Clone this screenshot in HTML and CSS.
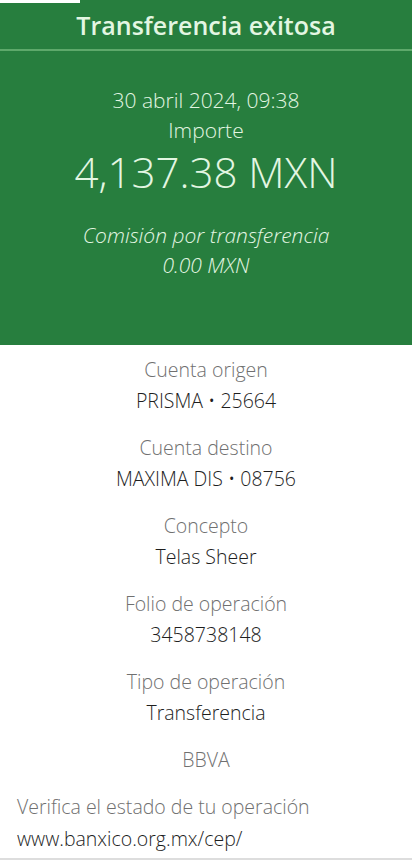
FILE: index.html
```html
<!DOCTYPE html>
<html lang="es">
<head>
    <meta charset="UTF-8">
    <meta name="viewport" content="width=device-width, initial-scale=1.0">
    <title>Transferencia exitosa</title>
    <link rel="stylesheet" href="styles.css">
</head>
<body>

<!-- Green summary block -->
<div class="summary">
    <div class="top-strip"></div>
    <h1 class="title">Transferencia exitosa</h1>
    <div class="summary-body">
        <p class="date">30 abril 2024, 09:38</p>
        <p class="amount-label">Importe</p>
        <p class="amount">4,137.38 MXN</p>
        <p class="fee">Comisión por transferencia</p>
        <p class="fee">0.00 MXN</p>
    </div>
</div>

<!-- Details list -->
<div class="details">
    <div class="item">
        <p class="label">Cuenta origen</p>
        <p class="value">PRISMA • 25664</p>
    </div>
    <div class="item">
        <p class="label">Cuenta destino</p>
        <p class="value">MAXIMA DIS • 08756</p>
    </div>
    <div class="item">
        <p class="label">Concepto</p>
        <p class="value">Telas Sheer</p>
    </div>
    <div class="item">
        <p class="label">Folio de operación</p>
        <p class="value">3458738148</p>
    </div>
    <div class="item">
        <p class="label">Tipo de operación</p>
        <p class="value">Transferencia</p>
    </div>
    <div class="item bank">
        <p class="label">BBVA</p>
    </div>
</div>

<div class="verify">
    <p class="label">Verifica el estado de tu operación</p>
    <p class="value">www.banxico.org.mx/cep/</p>
</div>

</body>
</html>
```

FILE: styles.css
```css
body {
    margin: 0;
    padding: 0;
    font-family: "Open Sans", Roboto, sans-serif;
    background-color: #fff;
}
p {
    margin: 0;
}
.summary {
    background-color: #277e3e;
    color: #e3f6e2;
    text-align: center;
    height: 345px;
}
.top-strip {
    width: 80px;
    height: 3px;
    background-color: #fff;
}
.title {
    margin: 0;
    height: 46px;
    line-height: 44px;
    font-size: 25px;
    font-weight: 600;
    border-bottom: 2px solid #5ea96b;
}
.summary-body {
    padding-top: 34px;
}
.date, .amount-label {
    font-size: 21px;
    font-weight: 300;
    line-height: 30px;
}
.amount {
    font-size: 42px;
    font-weight: 300;
    line-height: 54px;
    margin-bottom: 21px;
}
.fee {
    font-size: 21px;
    font-style: italic;
    font-weight: 300;
    line-height: 30px;
}
.details {
    text-align: center;
    padding-top: 12px;
}
.item {
    height: 78px;
}
.item.bank {
    height: 47px;
}
.label {
    color: #707070;
    font-size: 19.5px;
    font-weight: 300;
    line-height: 26px;
}
.value {
    color: #1e1e1e;
    font-size: 19.5px;
    font-weight: 350;
    line-height: 36px;
}
.verify {
    padding: 0 17px;
    border-bottom: 2px solid #ddd;
}
.verify .value {
    line-height: 38px;
}
```
